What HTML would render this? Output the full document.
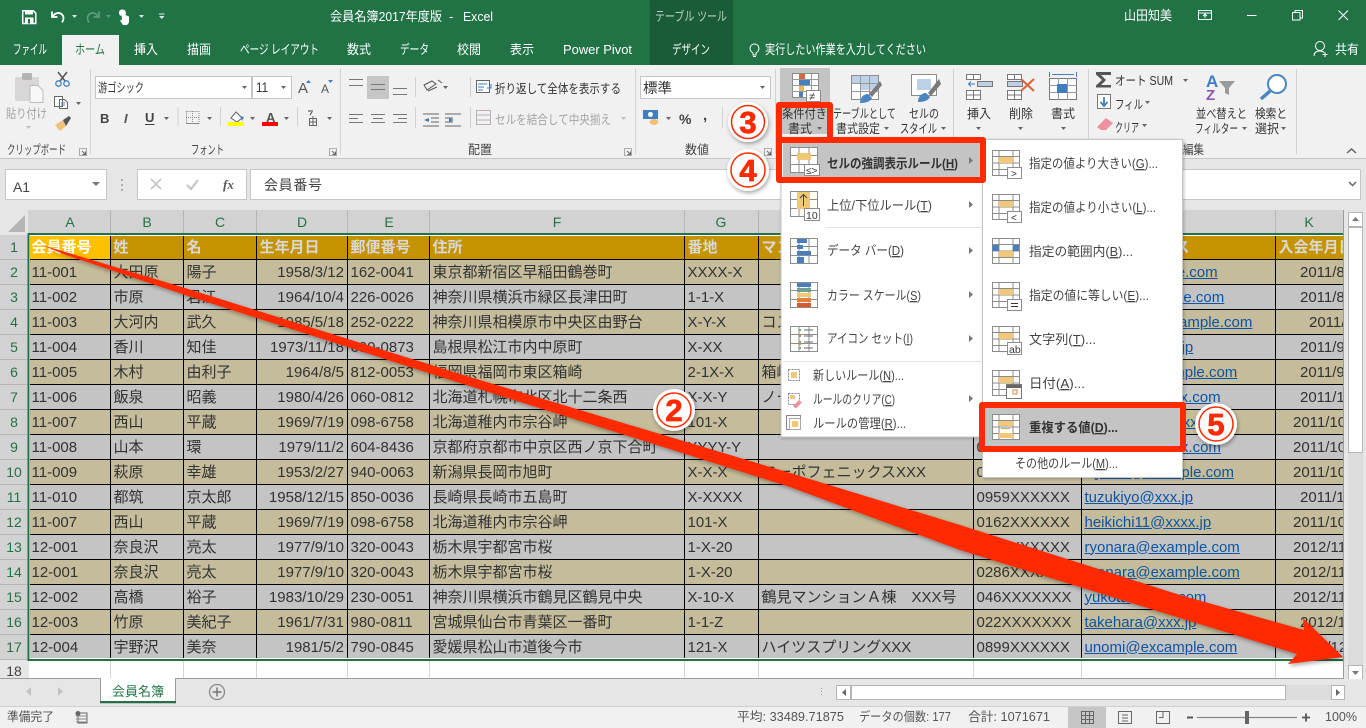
<!DOCTYPE html>
<html lang="ja"><head><meta charset="utf-8"><title>会員名簿2017年度版 - Excel</title>
<style>
html,body{margin:0;padding:0;width:1366px;height:728px;overflow:hidden;background:#e6e6e6}
body{position:relative;font-family:"Liberation Sans","Noto Sans CJK JP",sans-serif}
#g{position:absolute;left:29px;top:235px;width:1314px;height:425px;overflow:hidden}
table{border-collapse:separate;border-spacing:0;table-layout:fixed;width:1315px;font-size:15px;color:#333}
td{height:25px;box-sizing:border-box;border-right:1px solid #000;border-bottom:1px solid #000;padding:0 0 0 2.5px;white-space:nowrap;overflow:hidden;line-height:23px}
tr.h td{background:#c69300;color:#d8d8d8;font-weight:bold}
tr.a td{background:#c5bc9b}
tr.b td{background:#c4c4c4}
td.d{text-align:right;padding:0 3px 0 0}
td.l{color:#0b55a5}
td.l span{text-decoration:underline}
td.k{padding-left:24px}td.k2{padding-left:33px}td.k3{padding-left:17px}
tr.h td.s{background:#ffc000;color:#fff}
svg{position:absolute;left:0;top:0}
text{font-family:"Liberation Sans","Noto Sans CJK JP",sans-serif;font-size:12.5px;fill:#444}
.w{fill:#fff;font-size:13px}.gy{fill:#a3a3a3}.m{font-size:13px;fill:#444}.bd{font-size:13px;font-weight:bold;fill:#333}
.ch{font-size:14px;fill:#217346;text-anchor:middle}
.u{text-decoration:underline}
.tri{fill:#666}.ln{stroke:#666;stroke-width:1;fill:none}
</style></head><body>
<div id="g"><table>
<colgroup><col style="width:82px"><col style="width:73px"><col style="width:73px"><col style="width:91px"><col style="width:82px"><col style="width:255px"><col style="width:74px"><col style="width:215px"><col style="width:108px"><col style="width:194px"><col style="width:68px"></colgroup>
<tr class="h"><td class="s">会員番号</td><td>姓</td><td>名</td><td>生年月日</td><td>郵便番号</td><td>住所</td><td>番地</td><td>マンション名</td><td>電話番号</td><td>メールアドレス</td><td>入会年月日</td></tr>
<tr class="a"><td>11-001</td><td>大田原</td><td>陽子</td><td class="d">1958/3/12</td><td>162-0041</td><td>東京都新宿区早稲田鶴巻町</td><td>XXXX-X</td><td></td><td>03XXXXXXXX</td><td class="l" style="text-indent:-3px"><span>yoko@example.com</span></td><td class="k">2011/8/1</td></tr>
<tr class="b"><td>11-002</td><td>市原</td><td>君江</td><td class="d">1964/10/4</td><td>226-0026</td><td>神奈川県横浜市緑区長津田町</td><td>1-1-X</td><td></td><td>045XXXXXXX</td><td class="l" style="text-indent:-8px"><span>kimie1@example.com</span></td><td class="k">2011/8/5</td></tr>
<tr class="a"><td>11-003</td><td>大河内</td><td>武久</td><td class="d">1985/5/18</td><td>252-0222</td><td>神奈川県相模原市中央区由野台</td><td>X-Y-X</td><td>コスモ</td><td>042XXXXXXX</td><td class="l" style="text-indent:-8px"><span>takehisa11@example.com</span></td><td class="k2">2011/9/2</td></tr>
<tr class="b"><td>11-004</td><td>香川</td><td>知佳</td><td class="d">1973/11/18</td><td>690-0873</td><td>島根県松江市内中原町</td><td>X-XX</td><td></td><td>0852XXXXXX</td><td class="l" style="text-indent:6px"><span>tomoka@xxx.jp</span></td><td class="k">2011/9/5</td></tr>
<tr class="a"><td>11-005</td><td>木村</td><td>由利子</td><td class="d">1964/8/5</td><td>812-0053</td><td>福岡県福岡市東区箱崎</td><td>2-1X-X</td><td>箱崎</td><td>092XXXXXXX</td><td class="l"><span>yuriko5@example.com</span></td><td class="k">2011/9/9</td></tr>
<tr class="b"><td>11-006</td><td>飯泉</td><td>昭義</td><td class="d">1980/4/26</td><td>060-0812</td><td>北海道札幌市北区北十二条西</td><td>X-X-Y</td><td>ノース</td><td>011XXXXXXX</td><td class="l" style="text-indent:20px"><span>iizumi@xxxx.com</span></td><td class="k">2011/1</td></tr>
<tr class="a"><td>11-007</td><td>西山</td><td>平蔵</td><td class="d">1969/7/19</td><td>098-6758</td><td>北海道稚内市宗谷岬</td><td>101-X</td><td></td><td>0162XXXXXX</td><td class="l" style="text-indent:18px"><span>heikichi@xxxx</span></td><td class="k3">2011/10</td></tr>
<tr class="b"><td>11-008</td><td>山本</td><td>環</td><td class="d">1979/11/2</td><td>604-8436</td><td>京都府京都市中京区西ノ京下合町</td><td>XYYY-Y</td><td></td><td>075XXXXXXX</td><td class="l" style="text-indent:7px"><span>tamaki@xxxxx.com</span></td><td class="k3">2011/10</td></tr>
<tr class="a"><td>11-009</td><td>萩原</td><td>幸雄</td><td class="d">1953/2/27</td><td>940-0063</td><td>新潟県長岡市旭町</td><td>X-X-X</td><td>コーポフェニックスXXX</td><td>0258XXXXXX</td><td class="l" style="text-indent:10px"><span>yukio@example.com</span></td><td class="k3">2011/10</td></tr>
<tr class="b"><td>11-010</td><td>都筑</td><td>京太郎</td><td class="d">1958/12/15</td><td>850-0036</td><td>長崎県長崎市五島町</td><td>X-XXXX</td><td></td><td>0959XXXXXX</td><td class="l"><span>tuzukiyo@xxx.jp</span></td><td class="k">2011/1</td></tr>
<tr class="a"><td>11-007</td><td>西山</td><td>平蔵</td><td class="d">1969/7/19</td><td>098-6758</td><td>北海道稚内市宗谷岬</td><td>101-X</td><td></td><td>0162XXXXXX</td><td class="l"><span>heikichi11@xxxx.jp</span></td><td class="k3">2011/10</td></tr>
<tr class="b"><td>12-001</td><td>奈良沢</td><td>亮太</td><td class="d">1977/9/10</td><td>320-0043</td><td>栃木県宇都宮市桜</td><td>1-X-20</td><td></td><td>0286XXXXXX</td><td class="l"><span>ryonara@example.com</span></td><td class="k3">2012/11</td></tr>
<tr class="a"><td>12-001</td><td>奈良沢</td><td>亮太</td><td class="d">1977/9/10</td><td>320-0043</td><td>栃木県宇都宮市桜</td><td>1-X-20</td><td></td><td>0286XXXXXX</td><td class="l"><span>ryonara@example.com</span></td><td class="k3">2012/11</td></tr>
<tr class="b"><td>12-002</td><td>高橋</td><td>裕子</td><td class="d">1983/10/29</td><td>230-0051</td><td>神奈川県横浜市鶴見区鶴見中央</td><td>X-10-X</td><td>鶴見マンションＡ棟　XXX号</td><td>046XXXXXXX</td><td class="l"><span>yukota@xxxx.com</span></td><td class="k3">2012/11</td></tr>
<tr class="a"><td>12-003</td><td>竹原</td><td>美紀子</td><td class="d">1961/7/31</td><td>980-0811</td><td>宮城県仙台市青葉区一番町</td><td>1-1-Z</td><td></td><td>022XXXXXXX</td><td class="l"><span>takehara@xxx.jp</span></td><td class="k">2012/1</td></tr>
<tr class="b"><td>12-004</td><td>宇野沢</td><td>美奈</td><td class="d">1981/5/2</td><td>790-0845</td><td>愛媛県松山市道後今市</td><td>121-X</td><td>ハイツスプリングXXX</td><td>0899XXXXXX</td><td class="l"><span>unomi@excample.com</span></td><td class="k3">2012/12</td></tr>
</table></div>

<svg width="1366" height="728" viewBox="0 0 1366 728" xmlns="http://www.w3.org/2000/svg">
<defs>
<filter id="sh" x="-5%" y="-5%" width="110%" height="110%"><feDropShadow dx="1" dy="2" stdDeviation="2" flood-color="#000" flood-opacity=".35"/></filter>
<filter id="ms" x="-5%" y="-5%" width="110%" height="110%"><feDropShadow dx="1" dy="1" stdDeviation="1.5" flood-color="#000" flood-opacity=".25"/></filter>
<g id="gm"><rect x=".5" y=".5" width="27" height="25" fill="#fff" stroke="#8c8c8c"/><path d="M9 0v26M19 0v26M0 8.500h28M0 17.500h28" stroke="#8c8c8c" fill="none"/></g>
<g id="gs"><rect x=".5" y=".5" width="27" height="25" fill="#fff" stroke="#8c8c8c"/><path d="M7 0v26M21 0v26M0 6.500h28M0 19.500h28M0 13h28" stroke="#8c8c8c" fill="none"/></g>
</defs>

<!-- title bar -->
<rect x="0" y="0" width="1366" height="65" fill="#217346"/>
<rect x="650" y="0" width="83" height="65" fill="#1b5c38"/>
<path d="M22.700 10.700h10.600l2.500 2.500v10.300h-13.100z" fill="none" stroke="#fff" stroke-width="1.500"/>
<rect x="25" y="10" width="8" height="4.500" fill="#fff"/><rect x="25" y="17.500" width="8.500" height="6" fill="#fff"/><rect x="28" y="19" width="2" height="4.500" fill="#217346"/>
<path d="M52 11.500v5.500h5.500M52.500 16.500c3-4 7-4.500 9.500-2 2 2 2 5 0 8" fill="none" stroke="#fff" stroke-width="1.800"/>
<path d="M72 15h5l-2.500 3z" fill="#dfe9e3"/>
<path d="M99 11.500v5.500h-5.500M98.500 16.500c-3-4-7-4.500-9.500-2-2 2-2 5 0 8" fill="none" stroke="#5c9a78" stroke-width="1.800"/>
<path d="M106 15h5l-2.500 3z" fill="#5c9a78"/>
<path d="M120 15.500c-2-3-1-6 2.500-6 3 0 4 2.500 3 5.500l3.500 1.500v6l-2 2.500h-4l-3-4.500 1-.5.8.6v-7c0-1.800 1.700-1.800 1.700 0v2.500" fill="#fff"/>
<path d="M139 15h5l-2.500 3z" fill="#dfe9e3"/>
<path d="M159 13.500h5.500v1h-5.500zM159 16h5.500l-2.750 3z" fill="#dfe9e3"/>
<text class="w" x="330" y="21" textLength="112" lengthAdjust="spacingAndGlyphs">会員名簿2017年度版</text>
<text class="w" x="449" y="21">-</text>
<text class="w" x="463" y="21" textLength="30" lengthAdjust="spacingAndGlyphs">Excel</text>
<text x="655" y="21" style="fill:#b7cfc1;font-size:13px" textLength="72" lengthAdjust="spacingAndGlyphs">テーブル ツール</text>
<text class="w" x="1124" y="20" textLength="48" lengthAdjust="spacingAndGlyphs">山田知美</text>
<rect x="1198.500" y="10.500" width="13" height="9" fill="none" stroke="#fff"/><path d="M1198 13h14M1205 18v-4M1203 16l2-2 2 2" stroke="#fff" fill="none"/>
<path d="M1247 15.500h9.500" stroke="#fff"/>
<rect x="1292.500" y="12.500" width="7.500" height="7.500" fill="none" stroke="#fff"/><path d="M1295 12.500v-2h7.500v7.500h-2.500" fill="none" stroke="#fff"/>
<path d="M1338.500 10.500l9.500 9.500M1348 10.500l-9.500 9.500" stroke="#fff" fill="none"/>

<!-- tabs -->
<rect x="62" y="35" width="57" height="30" fill="#f1f1f1"/>
<text class="w" x="13" y="54" textLength="34" lengthAdjust="spacingAndGlyphs">ファイル</text>
<text x="75" y="54" style="fill:#217346;font-size:13px" textLength="30" lengthAdjust="spacingAndGlyphs">ホーム</text>
<text class="w" x="134" y="54" textLength="24" lengthAdjust="spacingAndGlyphs">挿入</text>
<text class="w" x="187" y="54" textLength="24" lengthAdjust="spacingAndGlyphs">描画</text>
<text class="w" x="240" y="54" textLength="79" lengthAdjust="spacingAndGlyphs">ページ レイアウト</text>
<text class="w" x="347" y="54" textLength="24" lengthAdjust="spacingAndGlyphs">数式</text>
<text class="w" x="400" y="54" textLength="29" lengthAdjust="spacingAndGlyphs">データ</text>
<text class="w" x="457" y="54" textLength="24" lengthAdjust="spacingAndGlyphs">校閲</text>
<text class="w" x="510" y="54" textLength="24" lengthAdjust="spacingAndGlyphs">表示</text>
<text class="w" x="563" y="54" textLength="69" lengthAdjust="spacingAndGlyphs">Power Pivot</text>
<text class="w" x="672" y="54" textLength="38" lengthAdjust="spacingAndGlyphs">デザイン</text>
<path d="M753 55v-2c-5-3-3-9 1.500-9s6.500 6 1.500 9v2zM753 56.500h3" fill="none" stroke="#fff"/>
<text class="w" x="765" y="54" textLength="161" lengthAdjust="spacingAndGlyphs">実行したい作業を入力してください</text>
<circle cx="1320" cy="46" r="4.500" fill="none" stroke="#fff"/><path d="M1314 56c0-4 3-5 6-5 1.500 0 3 .5 4 1.500M1325 52v5M1322.500 54.500h5" fill="none" stroke="#fff"/>
<text class="w" x="1335" y="54" textLength="24" lengthAdjust="spacingAndGlyphs">共有</text>

<!-- ribbon -->
<rect x="0" y="65" width="1366" height="93" fill="#f1f1f1"/>
<rect x="0" y="158" width="1366" height="1" fill="#c6c6c6"/>
<path d="M90.500 69v85M340.500 69v85M635.500 69v85M775.500 69v85M953.500 69v85M1088.500 69v85M1296.500 69v85" stroke="#d2d2d2"/>
<!-- clipboard -->
<rect x="15" y="77" width="24" height="24" rx="1.500" fill="#d8d6d6"/><rect x="22" y="73" width="10" height="7" rx="1" fill="#b5b3b3"/>
<path d="M30 85.500h8l5 5v12h-13z" fill="#f7f7f7" stroke="#bcbcbc"/>
<text class="gy" x="6" y="118" textLength="41" lengthAdjust="spacingAndGlyphs">貼り付け</text>
<path d="M26 126h5l-2.500 3z" fill="#bdbdbd"/>
<path d="M58 72l7 9M67 72l-7 9" stroke="#555" stroke-width="1.500" fill="none"/><circle cx="58.500" cy="83.500" r="2.700" fill="none" stroke="#3f7fbf" stroke-width="1.300"/><circle cx="66.500" cy="83.500" r="2.700" fill="none" stroke="#3f7fbf" stroke-width="1.300"/>
<path d="M54.500 96.500h8v10h-8zM59.500 99.500h5l3 3v6h-8z" fill="#fff" stroke="#666"/><path d="M61 103h4M61 105h4" stroke="#4a86c0"/>
<path d="M76 102h5l-2.500 3z" class="tri"/>
<path d="M55 125l8-5 3 6-6 5z" fill="#f2c078"/><path d="M63 120l6-4 2 2-5 8z" fill="#555"/>
<text x="7" y="154" textLength="59" lengthAdjust="spacingAndGlyphs">クリップボード</text>
<path d="M79.500 148.500h7v7h-7z" fill="none" stroke="#999" stroke-width=".8"/><path d="M82 151l3.500 3.500M85.500 151.500v3h-3" stroke="#666" fill="none"/>
<!-- font -->
<rect x="95.500" y="76.500" width="156" height="22" fill="#fff" stroke="#c6c6c6"/>
<rect x="252.500" y="76.500" width="39" height="22" fill="#fff" stroke="#c6c6c6"/>
<text x="98" y="92" style="fill:#333" textLength="46" lengthAdjust="spacingAndGlyphs">游ゴシック</text>
<text x="256" y="92" style="fill:#333;font-size:14px" textLength="12" lengthAdjust="spacingAndGlyphs">11</text>
<path d="M242 86h5l-2.500 3zM281 86h5l-2.500 3z" class="tri"/>
<text x="298" y="93" style="font-size:15px;fill:#555">A</text><path d="M306 83h5l-2.500-3z" fill="#3f7fbf"/>
<text x="321" y="93" style="font-size:12px;fill:#555">A</text><path d="M328 80h5l-2.500 3z" fill="#3f7fbf"/>
<text x="100" y="123" style="font-weight:bold;font-size:13px;fill:#444">B</text>
<text x="124" y="123" style="font-style:italic;font-weight:bold;font-size:13px;fill:#555">I</text>
<text x="145" y="122" style="font-weight:bold;font-size:13px;fill:#444">U</text><path d="M145 124.500h9.500" stroke="#444"/>
<path d="M164 117h5l-2.500 3zM207 117h5l-2.500 3zM250 117h5l-2.500 3zM284 117h5l-2.500 3zM327 117h5l-2.500 3z" class="tri"/>
<path d="M199 123.500h-13" stroke="#888" fill="none"/>
<rect x="186.500" y="111.500" width="12.500" height="12" fill="none" stroke="#888" stroke-dasharray="1 1"/><path d="M192.500 111v12.500M186 117.500h13" stroke="#888" stroke-dasharray="1 1"/>
<path d="M178 107v19M220.500 107v19M297.500 107v19" stroke="#d2d2d2"/>
<path d="M231 118l5-6 6 6-5 4z" fill="#fff" stroke="#666"/><path d="M240 116l4 1-2 4z" fill="#3f7fbf"/>
<rect x="228" y="122" width="16" height="4" fill="#ffff00"/>
<text x="266" y="122" style="font-weight:bold;font-size:13px;fill:#555">A</text>
<rect x="262" y="122" width="16" height="4" fill="#ff0000"/>
<path d="M312 112l-2 3M308 111h5" stroke="#444" fill="none"/>
<rect x="309.500" y="118.500" width="7" height="7" fill="none" stroke="#666"/><path d="M313 116v10M309 122h8" stroke="#666"/>
<text x="191" y="154" textLength="33" lengthAdjust="spacingAndGlyphs">フォント</text>
<path d="M329.500 148.500h7v7h-7z" fill="none" stroke="#999" stroke-width=".8"/><path d="M332 151l3.500 3.500M335.500 151.500v3h-3" stroke="#666" fill="none"/>
<!-- align -->
<rect x="367" y="76" width="22" height="23" fill="#c6c6c6"/>
<path d="M349 79.500h14M349 85.500h14M371 84.500h14M371 89.500h14M393 88.500h14M393 94.500h14" stroke="#777"/>
<path d="M349 114.500h14M349 118.500h9M349 122.500h14M371 114.500h14M373 118.500h10M371 122.500h14M393 114.500h14M398 118.500h9M393 122.500h14" stroke="#777"/>
<path d="M415.500 77v20M415.500 107v21" stroke="#d2d2d2"/>
<path d="M424 85l8-4 4 3-9 6zM428 91l9-4M438 80l4 3" fill="none" stroke="#555"/><path d="M443 86h5l-2.500 3z" class="tri"/>
<path d="M423 114h16M431 118h8M431 122h8M423 126h16" stroke="#666"/><path d="M429 118l-5 2 5 2z" fill="#3f7fbf"/>
<path d="M445 114h16M445 118h8M445 122h8M445 126h16" stroke="#666"/><path d="M449 118l5 2-5 2z" fill="#3f7fbf"/>
<path d="M470.500 77v20M470.500 107v21" stroke="#d2d2d2"/>
<rect x="476.500" y="80.500" width="13" height="12" fill="#fff" stroke="#666"/><path d="M478 84h9M478 87h6M478 90h5" stroke="#3f7fbf"/><path d="M491 84v4h-4" stroke="#3f7fbf" fill="none"/>
<text x="495" y="93" style="fill:#333" textLength="126" lengthAdjust="spacingAndGlyphs">折り返して全体を表示する</text>
<rect x="476.500" y="110.500" width="14" height="14" fill="none" stroke="#bcaebc"/><path d="M476 115h15M476 120h15" stroke="#bcaebc"/>
<text class="gy" x="495" y="124" textLength="116" lengthAdjust="spacingAndGlyphs">セルを結合して中央揃え</text>
<path d="M621 117h5l-2.500 3z" fill="#c0c0c0"/>
<text x="468" y="154" textLength="24" lengthAdjust="spacingAndGlyphs">配置</text>
<path d="M624.500 148.500h7v7h-7z" fill="none" stroke="#999" stroke-width=".8"/><path d="M627 151l3.500 3.500M630.500 151.500v3h-3" stroke="#666" fill="none"/>
<!-- number -->
<rect x="640.500" y="76.500" width="130" height="22" fill="#fff" stroke="#c6c6c6"/>
<text x="643" y="93" style="fill:#333;font-size:14px" textLength="29" lengthAdjust="spacingAndGlyphs">標準</text>
<path d="M760 86h5l-2.500 3z" class="tri"/>
<rect x="643" y="110" width="15" height="9" fill="#3f7fbf"/><circle cx="650.500" cy="114.500" r="2.500" fill="#fff"/><ellipse cx="654" cy="122" rx="4.500" ry="3" fill="#f2c078"/>
<path d="M666 117h5l-2.500 3z" class="tri"/>
<text x="679" y="124" style="font-size:14px;fill:#444;font-weight:bold">%</text>
<text x="703" y="120" style="font-size:15px;fill:#444;font-weight:bold">,</text>
<path d="M722.500 107v21" stroke="#d2d2d2"/>
<text x="685" y="154" textLength="24" lengthAdjust="spacingAndGlyphs">数値</text>
<path d="M764.500 148.500h7v7h-7z" fill="none" stroke="#999" stroke-width=".8"/><path d="M767 151l3.500 3.500M770.500 151.500v3h-3" stroke="#666" fill="none"/>
<!-- styles -->
<rect x="780" y="68" width="50" height="66" fill="#c4c4c4"/>
<rect x="792.500" y="73.500" width="26" height="24" fill="#fff" stroke="#8c8c8c"/><path d="M799.500 73v25M811.500 73v25M792 79.500h27M792 85.500h27M792 91.500h27" stroke="#999"/>
<rect x="799" y="74" width="6" height="5" fill="#d9663f"/><rect x="799" y="80" width="11" height="5" fill="#4a7fbd"/><rect x="799" y="86" width="5" height="5" fill="#e9b35f"/><rect x="799" y="92" width="4" height="5" fill="#4a7fbd"/>
<rect x="806.500" y="90.500" width="14" height="11" fill="#fff" stroke="#8c8c8c"/><text x="809" y="100" style="font-size:11px;fill:#333">≠</text>
<text x="782" y="118" style="fill:#333" textLength="45" lengthAdjust="spacingAndGlyphs">条件付き</text>
<text x="788" y="133" style="fill:#333" textLength="24" lengthAdjust="spacingAndGlyphs">書式</text>
<path d="M817 127h5l-2.500 3z" class="tri"/>
<rect x="851.500" y="75.500" width="27" height="24" fill="#fff" stroke="#8c8c8c"/><rect x="852" y="76" width="26" height="7" fill="#bcd0e8"/><rect x="860" y="84" width="18" height="6" fill="#bcd0e8"/><path d="M860.500 75v25M869.500 75v25M851 83.500h28M851 91.500h28" stroke="#999"/>
<path d="M880 81l-11 13 3 3 10-12z" fill="#7a7a7a"/><path d="M860 103c0-5 3-9 8-9l4 4c-2 4-7 5-12 5z" fill="#4a86c0"/>
<text x="833" y="118" style="fill:#333" textLength="63" lengthAdjust="spacingAndGlyphs">テーブルとして</text>
<text x="836" y="133" style="fill:#333" textLength="44" lengthAdjust="spacingAndGlyphs">書式設定</text>
<path d="M884 127h5l-2.500 3z" class="tri"/>
<rect x="911.500" y="74.500" width="25" height="21" fill="#fff" stroke="#8c8c8c"/><rect x="917" y="79" width="14" height="11" fill="#bcd0e8"/>
<path d="M939 79l-11 14 3 3 10-12z" fill="#7a7a7a"/><path d="M918 102c0-5 3-9 8-9l4 4c-2 4-7 5-12 5z" fill="#4a86c0"/>
<text x="909" y="118" style="fill:#333" textLength="30" lengthAdjust="spacingAndGlyphs">セルの</text>
<text x="900" y="133" style="fill:#333" textLength="37" lengthAdjust="spacingAndGlyphs">スタイル</text>
<path d="M941 127h5l-2.500 3z" class="tri"/>
<!-- cells -->
<path d="M966.500 74.500h14v5h-14zM973.500 74.500v5M966.500 90.500h14v9h-14zM966.500 95h14M973.500 90v9" fill="#fff" stroke="#777"/>
<rect x="977.500" y="81.500" width="15" height="5" fill="#bcd0e8" stroke="#777"/><path d="M975 84h-6M971 81.500l-2.500 2.500 2.500 2.500" stroke="#3f7fbf" fill="none"/>
<text x="967" y="118" style="fill:#333" textLength="24" lengthAdjust="spacingAndGlyphs">挿入</text>
<path d="M976 127h5l-2.500 3zM1018 127h5l-2.500 3zM1061 127h5l-2.500 3z" class="tri"/>
<path d="M1007.500 74.500h14v5h-14zM1014.500 74.500v5M1007.500 90.500h14v9h-14zM1007.500 95h14M1014.500 90v9" fill="#fff" stroke="#777"/>
<rect x="1007.500" y="81.500" width="15" height="5" fill="#bcd0e8" stroke="#777"/><path d="M1021 79l13 12M1034 79l-13 12" stroke="#d9663f" stroke-width="2.200"/>
<text x="1009" y="118" style="fill:#333" textLength="24" lengthAdjust="spacingAndGlyphs">削除</text>
<path d="M1049.500 72v5M1076.500 72v5M1052 74.500h22" stroke="#3f7fbf" fill="none"/>
<rect x="1049.500" y="78.500" width="27" height="21" fill="#fff" stroke="#777"/><path d="M1058.500 78v22M1067.500 78v22M1049 85.500h28M1049 92.500h28" stroke="#999"/><rect x="1057" y="84" width="10" height="9" fill="#3f7fbf"/>
<text x="1051" y="118" style="fill:#333" textLength="24" lengthAdjust="spacingAndGlyphs">書式</text>
<!-- editing -->
<path d="M1096 72h15v3h-10l5 5-5 5h10v2.500h-15v-2l6-5.500-6-5.500z" fill="#555"/>
<text x="1115" y="85" style="fill:#333" textLength="58" lengthAdjust="spacingAndGlyphs">オート SUM</text>
<path d="M1183 79h5l-2.500 3z" class="tri"/>
<rect x="1097.500" y="94.500" width="13" height="14" fill="#fff" stroke="#777"/><path d="M1104 97v8M1100.500 102l3.500 4 3.500-4" stroke="#3f7fbf" stroke-width="1.800" fill="none"/>
<text x="1115" y="109" style="fill:#333" textLength="28" lengthAdjust="spacingAndGlyphs">フィル</text>
<path d="M1145 101h5l-2.500 3zM1142 124h5l-2.500 3z" class="tri"/>
<path d="M1097 127l9-9 7 5-7 7h-5z" fill="#ef8f9f"/>
<text x="1115" y="132" style="fill:#333" textLength="24" lengthAdjust="spacingAndGlyphs">クリア</text>
<text x="1206" y="87" style="font-size:17px;font-weight:bold;fill:#3f7fbf">A</text>
<text x="1206" y="100" style="font-size:15px;font-weight:bold;fill:#8a58b0">Z</text>
<path d="M1219 81h16l-6 7v7l-4-2v-5z" fill="#9a9a9a"/>
<text x="1196" y="118" style="fill:#333" textLength="51" lengthAdjust="spacingAndGlyphs">並べ替えと</text>
<text x="1195" y="133" style="fill:#333" textLength="43" lengthAdjust="spacingAndGlyphs">フィルター</text>
<path d="M1242 127h5l-2.500 3zM1281 127h5l-2.500 3z" class="tri"/>
<circle cx="1277" cy="84" r="9" fill="#fff" stroke="#4a86c0" stroke-width="2"/><path d="M1270 91l-9 8" stroke="#4a86c0" stroke-width="3.500"/>
<text x="1255" y="118" style="fill:#333" textLength="32" lengthAdjust="spacingAndGlyphs">検索と</text>
<text x="1255" y="133" style="fill:#333" textLength="24" lengthAdjust="spacingAndGlyphs">選択</text>
<text x="1183" y="154" textLength="21" lengthAdjust="spacingAndGlyphs">編集</text>
<path d="M1347 153l4.500-4 4.500 4" fill="none" stroke="#666" stroke-width="1.500"/>

<!-- formula bar -->
<rect x="5.500" y="169.500" width="101" height="30" fill="#fff" stroke="#c6c6c6"/>
<text x="13" y="192" style="font-size:14px;fill:#444" textLength="17" lengthAdjust="spacingAndGlyphs">A1</text>
<path d="M92 182h8l-4 4z" fill="#777"/>
<path d="M122 179v2M122 184v2M122 189v2" stroke="#999" stroke-width="1.500"/>
<rect x="137.500" y="169.500" width="109" height="30" fill="#fff" stroke="#c6c6c6"/>
<rect x="250.500" y="169.500" width="1110" height="30" fill="#fff" stroke="#c6c6c6"/>
<path d="M151 179l10 10M161 179l-10 10" stroke="#c6c6c6" stroke-width="1.800"/>
<path d="M187 185l4 4 7-9" stroke="#c6c6c6" stroke-width="2.200" fill="none"/>
<text x="223" y="189" style="font-family:'Liberation Serif',serif;font-style:italic;font-weight:bold;font-size:13px;fill:#555">fx</text>
<text x="264" y="190" style="font-size:14px;fill:#444" textLength="58">会員番号</text>
<path d="M1349 182l3.500 3.500 3.500-3.500" stroke="#666" stroke-width="1.500" fill="none"/>

<!-- sheet headers -->
<rect x="0" y="210" width="1344" height="25" fill="#d2d2d2"/>
<rect x="0" y="210" width="28" height="25" fill="#e6e6e6"/>
<path d="M8 232l17-17v17z" fill="#b5b5b5"/>
<path d="M110.500 210v24M183.500 210v24M256.500 210v24M347.500 210v24M429.500 210v24M684.500 210v24M758.500 210v24M973.500 210v24M1081.500 210v24M1275.500 210v24" stroke="#b5b5b5"/>
<text class="ch" x="70" y="227">A</text><text class="ch" x="147" y="227">B</text><text class="ch" x="220" y="227">C</text><text class="ch" x="302" y="227">D</text><text class="ch" x="389" y="227">E</text><text class="ch" x="557" y="227">F</text><text class="ch" x="721" y="227">G</text><text class="ch" x="1309" y="227">K</text>
<rect x="0" y="235" width="28" height="425" fill="#d2d2d2"/>
<rect x="0" y="660" width="28" height="18" fill="#e6e6e6"/>
<path d="M0 259.500h28M0 284.500h28M0 309.500h28M0 334.500h28M0 359.500h28M0 384.500h28M0 409.500h28M0 434.500h28M0 459.500h28M0 484.500h28M0 509.500h28M0 534.500h28M0 559.500h28M0 584.500h28M0 609.500h28M0 634.500h28M0 659.500h28" stroke="#b5b5b5"/>
<g style="text-anchor:middle">
<text class="ch" x="14" y="252">1</text><text class="ch" x="14" y="277">2</text><text class="ch" x="14" y="302">3</text><text class="ch" x="14" y="327">4</text><text class="ch" x="14" y="352">5</text><text class="ch" x="14" y="377">6</text><text class="ch" x="14" y="402">7</text><text class="ch" x="14" y="427">8</text><text class="ch" x="14" y="452">9</text><text class="ch" x="14" y="477">10</text><text class="ch" x="14" y="502">11</text><text class="ch" x="14" y="527">12</text><text class="ch" x="14" y="552">13</text><text class="ch" x="14" y="577">14</text><text class="ch" x="14" y="602">15</text><text class="ch" x="14" y="627">16</text><text class="ch" x="14" y="652">17</text><text x="14" y="676" style="font-size:14px;fill:#444;text-anchor:middle">18</text>
</g>
<!-- selection & row 18 -->
<rect x="29" y="235" width="1314" height="1" fill="#fff"/><rect x="29" y="235" width="1" height="424" fill="#fff"/>
<rect x="29" y="658" width="1314" height="1" fill="#fff"/>
<rect x="29" y="660" width="1314" height="18" fill="#fff"/>
<path d="M110.500 661v17M183.500 661v17M256.500 661v17M347.500 661v17M429.500 661v17M684.500 661v17M758.500 661v17M973.500 661v17M1081.500 661v17M1275.500 661v17" stroke="#d4d4d4"/>
<rect x="27.500" y="233" width="1316" height="2" fill="#217346"/>
<rect x="27.500" y="233" width="2" height="428" fill="#217346"/>
<rect x="27.500" y="659" width="1316" height="2" fill="#217346"/>
<rect x="0" y="678" width="1344" height="1" fill="#9c9c9c"/><rect x="1343" y="210" width="1" height="469" fill="#9c9c9c"/>

<!-- vertical scrollbar -->
<rect x="1344" y="210" width="22" height="470" fill="#e6e6e6"/>
<rect x="1348" y="212" width="15" height="468" fill="#dcdcdc"/>
<rect x="1348.500" y="212.500" width="14" height="14" fill="#fff" stroke="#b5b5b5"/><path d="M1352 221h7l-3.500-4z" fill="#777"/>
<rect x="1348.500" y="227.500" width="14" height="225" fill="#fff" stroke="#b5b5b5"/>
<rect x="1348.500" y="665.500" width="14" height="14" fill="#fff" stroke="#b5b5b5"/><path d="M1352 671h7l-3.500 4z" fill="#777"/>

<!-- sheet tabs -->
<rect x="0" y="679" width="1366" height="27" fill="#e6e6e6"/>
<path d="M31 687v9l-5-4.500zM58 687v9l5-4.500z" fill="#c2c2c2"/>
<path d="M100.500 679v24h75v-24" fill="#fff" stroke="#9c9c9c"/>
<rect x="100" y="701" width="76" height="2" fill="#217346"/>
<rect x="101" y="678" width="74" height="2" fill="#fff"/>
<text x="112" y="696" style="fill:#217346;font-size:13px" textLength="52" lengthAdjust="spacingAndGlyphs">会員名簿</text>
<circle cx="217" cy="692" r="7.500" fill="none" stroke="#8a8a8a" stroke-width="1.300"/><path d="M212.500 692h9M217 687.500v9" stroke="#777" stroke-width="1.500"/>
<path d="M821.500 688v1M821.500 691v1M821.500 694v1" stroke="#999"/>
<rect x="836.500" y="685.500" width="14" height="14" fill="#fff" stroke="#b5b5b5"/><path d="M846 689v7l-4-3.500z" fill="#666"/>
<rect x="851" y="685" width="480" height="15" fill="#dcdcdc"/>
<rect x="851.500" y="685.500" width="434" height="14" fill="#fff" stroke="#b5b5b5"/>
<rect x="1331.500" y="685.500" width="13" height="14" fill="#fff" stroke="#b5b5b5"/><path d="M1336 689v7l4-3.500z" fill="#666"/>

<!-- status bar -->
<rect x="0" y="706" width="1366" height="22" fill="#f1f1f1"/>
<rect x="0" y="706" width="1366" height="1" fill="#d0d0d0"/>
<text x="7" y="721" style="fill:#555" textLength="47" lengthAdjust="spacingAndGlyphs">準備完了</text>
<circle cx="78" cy="713.500" r="2.500" fill="#666"/><rect x="78" y="713" width="9" height="10" fill="none" stroke="#666"/><path d="M76 716h11M76 719h11M76 722h11" stroke="#888"/>
<text x="737" y="721" style="fill:#555" textLength="107" lengthAdjust="spacingAndGlyphs">平均: 33489.71875</text>
<text x="859" y="721" style="fill:#555" textLength="92" lengthAdjust="spacingAndGlyphs">データの個数: 177</text>
<text x="968" y="721" style="fill:#555" textLength="82" lengthAdjust="spacingAndGlyphs">合計: 1071671</text>
<rect x="1068" y="707" width="38" height="21" fill="#c6c6c6"/>
<rect x="1081.500" y="711.500" width="12" height="12" fill="none" stroke="#666"/><path d="M1085.500 711v13M1089.500 711v13M1081 715.500h13M1081 719.500h13" stroke="#666"/>
<rect x="1118.500" y="711.500" width="13" height="12" fill="none" stroke="#666"/><path d="M1122 715h6M1122 718h6M1122 721h6" stroke="#666"/>
<path d="M1156.500 711.500h13v12h-13zM1163 711.500v6h-4" fill="none" stroke="#666"/>
<path d="M1187 717.500h6M1197 717.500h100" stroke="#888" stroke-width="1.200"/><path d="M1187 717.500h6" stroke="#555" stroke-width="2"/>
<rect x="1245" y="711" width="4" height="13" fill="#666"/>
<path d="M1302 717.500h8M1306 713.500v8" stroke="#555" stroke-width="1.800"/>
<text x="1325" y="721" style="fill:#555" textLength="32" lengthAdjust="spacingAndGlyphs">100%</text>

<!-- arrow -->
<polygon points="42,245 185,288 460,374 790,473 960,525 1180,595 1304,630 1303,618 1343,657 1288,664 1297,654 1180,618 960,550 790,487 460,383 185,295 66,255" fill="#ff2a00" filter="url(#sh)"/>

<!-- menus -->
<g filter="url(#ms)"><rect x="781" y="139" width="202" height="298" fill="#fff" stroke="#c6c6c6"/></g>
<g filter="url(#ms)"><rect x="982.500" y="139.500" width="200" height="338" fill="#fff" stroke="#c6c6c6"/></g>
<rect x="983" y="140" width="199" height="2" fill="#fff"/>
<rect x="783" y="142" width="198" height="37" fill="#c4c4c4"/>
<path d="M826 227.500h156M783 361.500h199" stroke="#e2e2e2"/>
<!-- left menu icons -->
<use href="#gm" x="790" y="147"/><rect x="797" y="153" width="14" height="7" fill="#f0c878"/>
<rect x="804.500" y="164.500" width="15" height="11" fill="#fff" stroke="#8c8c8c"/><text x="806" y="174" style="font-size:10px;fill:#333">≤&gt;</text>
<use href="#gm" x="790" y="191"/><rect x="797" y="192" width="13" height="17" fill="#f0c878"/><path d="M803.500 206v-11M800 198l3.500-3.500 3.500 3.500" stroke="#444" fill="none"/>
<rect x="804.500" y="208.500" width="15" height="12" fill="#fff" stroke="#8c8c8c"/><text x="806" y="219" style="font-size:10.500px;fill:#333">10</text>
<use href="#gm" x="790" y="238"/><rect x="797" y="239" width="10" height="4" fill="#4a7fbd"/><rect x="797" y="245" width="6" height="4" fill="#4a7fbd"/><rect x="797" y="251" width="14" height="4" fill="#4a7fbd"/><rect x="797" y="257" width="7" height="6" fill="#4a7fbd"/>
<use href="#gm" x="790" y="282"/><rect x="797" y="283" width="14" height="4" fill="#4a7fbd"/><rect x="797" y="288" width="14" height="4" fill="#6f9f8f"/><rect x="797" y="293" width="14" height="4" fill="#f0c878"/><rect x="797" y="298" width="14" height="4" fill="#e0803f"/><rect x="797" y="303" width="14" height="4" fill="#d9562f"/>
<use href="#gm" x="790" y="326"/><path d="M799 329h2v2h-2zM799 341h2v2h-2zM799 347h2v2h-2z" fill="#5fae8f"/><path d="M799 335h2v2h-2zM799 343h2v2h-2z" fill="#e0803f"/><path d="M804 330h9M804 336h9M804 342h9M804 348h9" stroke="#666"/>
<text x="827" y="168" class="bd" textLength="131" lengthAdjust="spacingAndGlyphs">セルの強調表示ルール(<tspan class="u">H</tspan>)</text>
<text x="827" y="210" class="m" textLength="105" lengthAdjust="spacingAndGlyphs">上位/下位ルール(<tspan class="u">T</tspan>)</text>
<text x="827" y="255" class="m" textLength="77" lengthAdjust="spacingAndGlyphs">データ バー(<tspan class="u">D</tspan>)</text>
<text x="827" y="300" class="m" textLength="94" lengthAdjust="spacingAndGlyphs">カラー スケール(<tspan class="u">S</tspan>)</text>
<text x="827" y="343" class="m" textLength="86" lengthAdjust="spacingAndGlyphs">アイコン セット(<tspan class="u">I</tspan>)</text>
<path d="M969 157v7l4-3.500zM969 201v7l4-3.500zM969 247v7l4-3.500zM969 291v7l4-3.500zM969 335v7l4-3.500zM969 395v7l4-3.500z" fill="#777"/>
<rect x="788.500" y="369.500" width="11" height="11" fill="#fff" stroke="#888" stroke-dasharray="2 1"/><rect x="791" y="372" width="6" height="6" fill="#f0c878"/>
<rect x="788.500" y="393.500" width="11" height="11" fill="#fff" stroke="#888" stroke-dasharray="2 1"/><rect x="790" y="395" width="5" height="4" fill="#f0c878"/><path d="M793 406l6-6 3 2.500-6 6z" fill="#ef8f9f"/>
<rect x="786.500" y="415.500" width="14" height="14" fill="#fff" stroke="#888"/><rect x="789.500" y="418.500" width="11" height="11" fill="none" stroke="#aaa"/><rect x="792" y="421" width="6" height="6" fill="#f0c878"/>
<text x="813" y="380" class="m" textLength="91" lengthAdjust="spacingAndGlyphs">新しいルール(<tspan class="u">N</tspan>)...</text>
<text x="813" y="404" class="m" textLength="82" lengthAdjust="spacingAndGlyphs">ルールのクリア(<tspan class="u">C</tspan>)</text>
<text x="813" y="428" class="m" textLength="93" lengthAdjust="spacingAndGlyphs">ルールの管理(<tspan class="u">R</tspan>)...</text>
<!-- submenu highlight -->
<rect x="985" y="408" width="195" height="38" fill="#c4c4c4"/>
<use href="#gs" x="992" y="150"/><rect x="999" y="157" width="14" height="6" fill="#f0c878"/>
<rect x="1007.500" y="167.500" width="14" height="11" fill="#fff" stroke="#8c8c8c"/><text x="1011" y="177" style="font-size:10px;fill:#333">&gt;</text>
<use href="#gs" x="992" y="194"/><rect x="999" y="201" width="14" height="6" fill="#f0c878"/>
<rect x="1007.500" y="211.500" width="14" height="11" fill="#fff" stroke="#8c8c8c"/><text x="1011" y="221" style="font-size:10px;fill:#333">&lt;</text>
<use href="#gs" x="992" y="238"/><rect x="992.500" y="245" width="6" height="6" fill="#4a7fbd"/><rect x="1013" y="245" width="6" height="6" fill="#4a7fbd"/><rect x="999" y="251" width="14" height="6" fill="#f0c878"/>
<use href="#gs" x="992" y="282"/><rect x="999" y="289" width="14" height="6" fill="#f0c878"/>
<rect x="1007.500" y="299.500" width="14" height="11" fill="#fff" stroke="#8c8c8c"/><path d="M1011 303.500h7M1011 306.500h7" stroke="#333"/>
<use href="#gs" x="992" y="326"/><rect x="999" y="333" width="14" height="6" fill="#f0c878"/>
<rect x="1007.500" y="342.500" width="14" height="12" fill="#fff" stroke="#8c8c8c"/><text x="1009" y="353" style="font-size:10.500px;fill:#333">ab</text>
<use href="#gs" x="992" y="370"/><rect x="999" y="377" width="14" height="6" fill="#f0c878"/>
<rect x="1006.500" y="384.500" width="15" height="14" fill="#fff" stroke="#777"/><rect x="1007" y="385" width="14" height="3" fill="#666"/><rect x="1013" y="390" width="4" height="4" fill="#fff" stroke="#e0803f"/>
<use href="#gs" x="992" y="414"/><path d="M999 421h14v5h-14zM999 433h14v5h-14z" fill="#f0c878"/><path d="M1001 428.500h9" stroke="#c9a55f"/>
<text x="1029" y="168" class="m" textLength="129" lengthAdjust="spacingAndGlyphs">指定の値より大きい(<tspan class="u">G</tspan>)...</text>
<text x="1029" y="212" class="m" textLength="127" lengthAdjust="spacingAndGlyphs">指定の値より小さい(<tspan class="u">L</tspan>)...</text>
<text x="1029" y="256" class="m" textLength="104" lengthAdjust="spacingAndGlyphs">指定の範囲内(<tspan class="u">B</tspan>)...</text>
<text x="1029" y="300" class="m" textLength="120" lengthAdjust="spacingAndGlyphs">指定の値に等しい(<tspan class="u">E</tspan>)...</text>
<text x="1029" y="344" class="m" textLength="67" lengthAdjust="spacingAndGlyphs">文字列(<tspan class="u">T</tspan>)...</text>
<text x="1029" y="388" class="m" textLength="56" lengthAdjust="spacingAndGlyphs">日付(<tspan class="u">A</tspan>)...</text>
<text x="1029" y="432" class="bd" textLength="89" lengthAdjust="spacingAndGlyphs">重複する値(<tspan class="u">D</tspan>)...</text>
<text x="1015" y="468" class="m" textLength="103" lengthAdjust="spacingAndGlyphs">その他のルール(<tspan class="u">M</tspan>)...</text>

<!-- red highlight boxes -->
<g fill="none" stroke="#ff2a00" stroke-width="6" stroke-linejoin="round">
<path d="M779 140v-35h51v35"/>
<rect x="779" y="140" width="204" height="40"/>
<rect x="982" y="405" width="201" height="44"/>
</g>

<!-- numbered circles -->
<g filter="url(#sh)"><circle cx="674" cy="410" r="21" fill="#fff"/><circle cx="748" cy="122" r="20" fill="#fff"/><circle cx="748" cy="170" r="21" fill="#fff"/><circle cx="1216" cy="424" r="21" fill="#fff"/></g>
<g fill="none" stroke="#ff2a00" stroke-width="1.500"><circle cx="674" cy="410" r="17"/><circle cx="748" cy="122" r="16.500"/><circle cx="748" cy="170" r="17"/><circle cx="1216" cy="424" r="17"/></g>
<g>
<text x="674" y="421" style="font-size:31px;font-weight:bold;fill:#ff2a00;stroke:#ff2a00;stroke-width:.8px;text-anchor:middle">2</text>
<text x="748" y="133" style="font-size:31px;font-weight:bold;fill:#ff2a00;stroke:#ff2a00;stroke-width:.8px;text-anchor:middle">3</text>
<text x="748" y="181" style="font-size:31px;font-weight:bold;fill:#ff2a00;stroke:#ff2a00;stroke-width:.8px;text-anchor:middle">4</text>
<text x="1216" y="435" style="font-size:31px;font-weight:bold;fill:#ff2a00;stroke:#ff2a00;stroke-width:.8px;text-anchor:middle">5</text>
</g>
</svg>
</body></html>
